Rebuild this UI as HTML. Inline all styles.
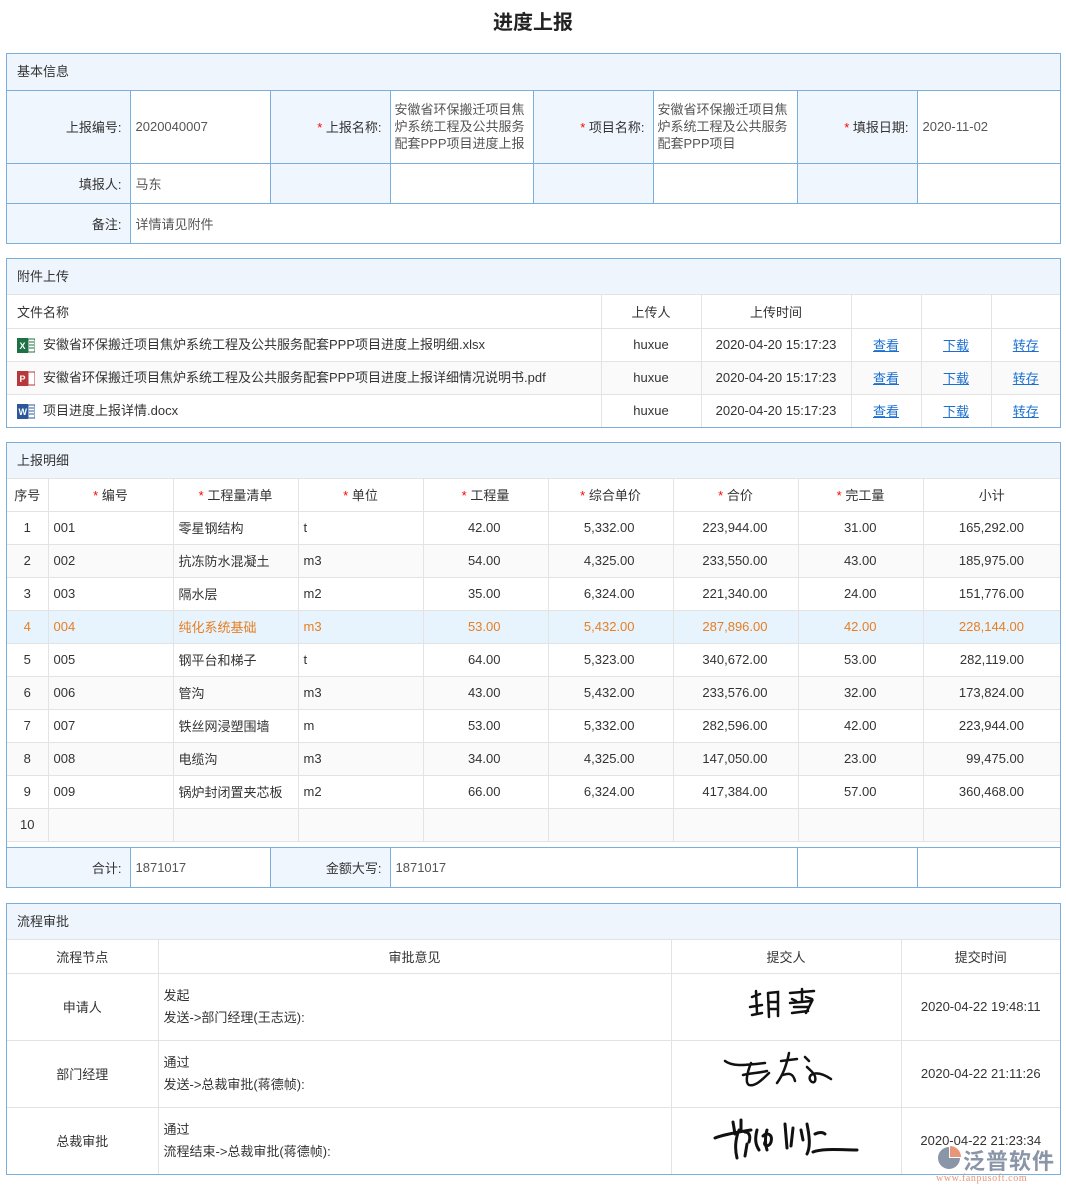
<!DOCTYPE html>
<html><head><meta charset="utf-8">
<style>
*{box-sizing:border-box;margin:0;padding:0}
body{width:1066px;height:1192px;background:#fff;font-family:"Liberation Sans","Noto Sans CJK SC",sans-serif;font-size:13px;color:#333;position:relative;overflow:hidden}
h1{position:absolute;left:0;width:1066px;top:9px;text-align:center;font-size:20px;font-weight:bold;color:#222;line-height:28px}
.sec{position:absolute;left:6px;width:1055px;border:1px solid #7aaedc;background:#fff;overflow:hidden}
.hd{height:36px;line-height:35px;padding-left:10px;background:#eef5fd;border-bottom:1px solid #e3e3e3;color:#333}
table{border-collapse:collapse;border-style:hidden;width:100%;table-layout:fixed}
td{border:1px solid #e3e3e3;padding:0 5px;white-space:nowrap;overflow:hidden}
.b td{border-color:#7aaedc}
.lb{background:#f0f6fd;text-align:right;padding-right:8px}
.v{color:#555}
.r{color:#f00}
.c{text-align:center}
.rt{text-align:right}
a{color:#1a6fd0;text-decoration:underline}
.alt td{background:#fafafa}
.hl td{background:#e8f4fd;color:#e67e22}
.ic{display:inline-block;width:18px;height:18px;vertical-align:middle;margin-right:8px;position:relative;top:-1px}
</style></head><body>
<h1>进度上报</h1>

<div class="sec" style="top:53px;height:191px;background:#f0f6fd">
<div class="hd" style="height:37px;line-height:36px;border-bottom-color:#7aaedc">基本信息</div>
<table class="b" style="background:#fff">
<colgroup><col style="width:123px"><col style="width:140px"><col style="width:120px"><col style="width:143px"><col style="width:120px"><col style="width:144px"><col style="width:120px"><col style="width:143px"></colgroup>
<tr style="height:72px"><td class="lb">上报编号:</td><td class="v">2020040007</td><td class="lb"><span class="r">*</span> 上报名称:</td><td class="v" style="white-space:normal;line-height:17px;padding:0 4px">安徽省环保搬迁项目焦炉系统工程及公共服务配套PPP项目进度上报</td><td class="lb"><span class="r">*</span> 项目名称:</td><td class="v" style="white-space:normal;line-height:17px;padding:0 4px">安徽省环保搬迁项目焦炉系统工程及公共服务配套PPP项目</td><td class="lb"><span class="r">*</span> 填报日期:</td><td class="v">2020-11-02</td></tr>
<tr style="height:40px"><td class="lb">填报人:</td><td class="v">马东</td><td class="lb"></td><td></td><td class="lb"></td><td></td><td class="lb"></td><td></td></tr>
<tr style="height:41px"><td class="lb">备注:</td><td class="v" colspan="7">详情请见附件</td></tr>
</table></div>

<div class="sec" style="top:258px;height:170px">
<div class="hd">附件上传</div>
<table>
<colgroup><col style="width:594px"><col style="width:100px"><col style="width:150px"><col style="width:70px"><col style="width:70px"><col style="width:69px"></colgroup>
<tr style="height:33px"><td style="padding-left:10px">文件名称</td><td class="c">上传人</td><td class="c">上传时间</td><td></td><td></td><td></td></tr>
<tr style="height:33px"><td style="padding-left:10px"><svg class="ic" viewBox="0 0 18 18"><rect x="0" y="2" width="11" height="15" fill="#1e7145"/><rect x="11" y="3" width="7" height="13" fill="#fff" stroke="#1e7145"/><path d="M12 6h5M12 9h5M12 12h5" stroke="#1e7145"/><text x="2.5" y="13" font-size="9" fill="#fff" font-family="Liberation Sans" font-weight="bold">X</text></svg>安徽省环保搬迁项目焦炉系统工程及公共服务配套PPP项目进度上报明细.xlsx</td><td class="c">huxue</td><td class="c">2020-04-20 15:17:23</td><td class="c"><a>查看</a></td><td class="c"><a>下载</a></td><td class="c"><a>转存</a></td></tr>
<tr style="height:33px" class="alt"><td style="padding-left:10px"><svg class="ic" viewBox="0 0 18 18"><rect x="0" y="2" width="11" height="15" fill="#b7373a"/><rect x="11" y="3" width="7" height="13" fill="#fff" stroke="#b7373a"/><text x="2.5" y="13" font-size="9" fill="#fff" font-family="Liberation Sans" font-weight="bold">P</text></svg>安徽省环保搬迁项目焦炉系统工程及公共服务配套PPP项目进度上报详细情况说明书.pdf</td><td class="c">huxue</td><td class="c">2020-04-20 15:17:23</td><td class="c"><a>查看</a></td><td class="c"><a>下载</a></td><td class="c"><a>转存</a></td></tr>
<tr style="height:33px"><td style="padding-left:10px"><svg class="ic" viewBox="0 0 18 18"><rect x="0" y="2" width="11" height="15" fill="#2b579a"/><rect x="11" y="3" width="7" height="13" fill="#fff" stroke="#2b579a"/><path d="M12 6h5M12 9h5M12 12h5" stroke="#2b579a"/><text x="1.5" y="13" font-size="9" fill="#fff" font-family="Liberation Sans" font-weight="bold">W</text></svg>项目进度上报详情.docx</td><td class="c">huxue</td><td class="c">2020-04-20 15:17:23</td><td class="c"><a>查看</a></td><td class="c"><a>下载</a></td><td class="c"><a>转存</a></td></tr>
</table></div>

<div class="sec" style="top:442px;height:446px">
<div class="hd">上报明细</div>
<table>
<colgroup><col style="width:41px"><col style="width:125px"><col style="width:125px"><col style="width:125px"><col style="width:125px"><col style="width:125px"><col style="width:125px"><col style="width:125px"><col style="width:137px"></colgroup>
<tr style="height:32px"><td class="c" style="padding:0">序号</td><td class="c"><span class="r">*</span> 编号</td><td class="c"><span class="r">*</span> 工程量清单</td><td class="c"><span class="r">*</span> 单位</td><td class="c"><span class="r">*</span> 工程量</td><td class="c"><span class="r">*</span> 综合单价</td><td class="c"><span class="r">*</span> 合价</td><td class="c"><span class="r">*</span> 完工量</td><td class="c">小计</td></tr>
<tr style="height:33px"><td class="c">1</td><td>001</td><td>零星钢结构</td><td>t</td><td class="rt" style="padding-right:47px">42.00</td><td class="rt" style="padding-right:38px">5,332.00</td><td class="rt" style="padding-right:30px">223,944.00</td><td class="rt" style="padding-right:46px">31.00</td><td class="rt" style="padding-right:36px">165,292.00</td></tr>
<tr style="height:33px" class="alt"><td class="c">2</td><td>002</td><td>抗冻防水混凝土</td><td>m3</td><td class="rt" style="padding-right:47px">54.00</td><td class="rt" style="padding-right:38px">4,325.00</td><td class="rt" style="padding-right:30px">233,550.00</td><td class="rt" style="padding-right:46px">43.00</td><td class="rt" style="padding-right:36px">185,975.00</td></tr>
<tr style="height:33px"><td class="c">3</td><td>003</td><td>隔水层</td><td>m2</td><td class="rt" style="padding-right:47px">35.00</td><td class="rt" style="padding-right:38px">6,324.00</td><td class="rt" style="padding-right:30px">221,340.00</td><td class="rt" style="padding-right:46px">24.00</td><td class="rt" style="padding-right:36px">151,776.00</td></tr>
<tr style="height:33px" class="hl"><td class="c">4</td><td>004</td><td>纯化系统基础</td><td>m3</td><td class="rt" style="padding-right:47px">53.00</td><td class="rt" style="padding-right:38px">5,432.00</td><td class="rt" style="padding-right:30px">287,896.00</td><td class="rt" style="padding-right:46px">42.00</td><td class="rt" style="padding-right:36px">228,144.00</td></tr>
<tr style="height:33px"><td class="c">5</td><td>005</td><td>钢平台和梯子</td><td>t</td><td class="rt" style="padding-right:47px">64.00</td><td class="rt" style="padding-right:38px">5,323.00</td><td class="rt" style="padding-right:30px">340,672.00</td><td class="rt" style="padding-right:46px">53.00</td><td class="rt" style="padding-right:36px">282,119.00</td></tr>
<tr style="height:33px" class="alt"><td class="c">6</td><td>006</td><td>管沟</td><td>m3</td><td class="rt" style="padding-right:47px">43.00</td><td class="rt" style="padding-right:38px">5,432.00</td><td class="rt" style="padding-right:30px">233,576.00</td><td class="rt" style="padding-right:46px">32.00</td><td class="rt" style="padding-right:36px">173,824.00</td></tr>
<tr style="height:33px"><td class="c">7</td><td>007</td><td>铁丝网浸塑围墙</td><td>m</td><td class="rt" style="padding-right:47px">53.00</td><td class="rt" style="padding-right:38px">5,332.00</td><td class="rt" style="padding-right:30px">282,596.00</td><td class="rt" style="padding-right:46px">42.00</td><td class="rt" style="padding-right:36px">223,944.00</td></tr>
<tr style="height:33px" class="alt"><td class="c">8</td><td>008</td><td>电缆沟</td><td>m3</td><td class="rt" style="padding-right:47px">34.00</td><td class="rt" style="padding-right:38px">4,325.00</td><td class="rt" style="padding-right:30px">147,050.00</td><td class="rt" style="padding-right:46px">23.00</td><td class="rt" style="padding-right:36px">99,475.00</td></tr>
<tr style="height:33px"><td class="c">9</td><td>009</td><td>锅炉封闭置夹芯板</td><td>m2</td><td class="rt" style="padding-right:47px">66.00</td><td class="rt" style="padding-right:38px">6,324.00</td><td class="rt" style="padding-right:30px">417,384.00</td><td class="rt" style="padding-right:46px">57.00</td><td class="rt" style="padding-right:36px">360,468.00</td></tr>
<tr style="height:33px" class="alt"><td class="c" style="padding:0">10</td><td></td><td></td><td></td><td></td><td></td><td></td><td></td><td></td></tr>
</table>
<div style="height:6px;border-top:1px solid #e3e3e3"></div>
<table class="b" style="border-top:1px solid #7aaedc;border-style:solid hidden hidden hidden">
<colgroup><col style="width:123px"><col style="width:140px"><col style="width:120px"><col style="width:407px"><col style="width:120px"><col style="width:143px"></colgroup>
<tr style="height:39px"><td class="lb">合计:</td><td class="v">1871017</td><td class="lb">金额大写:</td><td class="v">1871017</td><td></td><td></td></tr>
</table></div>

<div class="sec" style="top:903px;height:272px">
<div class="hd">流程审批</div>
<table>
<colgroup><col style="width:151px"><col style="width:513px"><col style="width:230px"><col style="width:159px"></colgroup>
<tr style="height:33px"><td class="c">流程节点</td><td class="c">审批意见</td><td class="c">提交人</td><td class="c">提交时间</td></tr>
<tr style="height:67px"><td class="c">申请人</td><td style="line-height:22px">发起<br>发送-&gt;部门经理(王志远):</td><td class="c"><svg width="80" height="40" viewBox="0 0 80 40" fill="none" stroke="#111" stroke-width="2.5" stroke-linecap="round"><path d="M6 12l8 -3M10 6l1 22M4 22l12 -2M6 30l10 -2M22 8l1 24M22 8l10 -1 0 24M23 17l8 0M23 24l8 0M44 8l24 -2M56 4l0 12M46 14l4 2M60 12l6 2M44 18l22 -2 -6 12M48 22l14 0M46 28l16 -2"/></svg></td><td class="c">2020-04-22 19:48:11</td></tr>
<tr style="height:67px"><td class="c">部门经理</td><td style="line-height:22px">通过<br>发送-&gt;总裁审批(蒋德帧):</td><td class="c"><svg width="130" height="50" viewBox="0 0 130 50" fill="none" stroke="#111" stroke-width="2.5" stroke-linecap="round"><path d="M4 14c8 6 20 4 40 2M30 16c-4 10-6 20-2 22 6 2 14-6 20-12M22 28c8-2 16-2 24-4M60 14l16-2M68 6c-2 10-6 22-12 30M62 28c6-2 10-2 12 6M84 10l4 4M86 20c4 4 10 8 8 14-2 4-8-2-4-6 6-4 14 0 20 4"/></svg></td><td class="c">2020-04-22 21:11:26</td></tr>
<tr style="height:67px"><td class="c">总裁审批</td><td style="line-height:22px">通过<br>流程结束-&gt;总裁审批(蒋德帧):</td><td class="c"><svg width="150" height="50" viewBox="0 0 150 50" fill="none" stroke="#111" stroke-width="3" stroke-linecap="round"><path d="M4 24c10-4 24-6 36-8M22 8l2 12M30 6l0 10M28 16c-4 10-4 20-2 28M34 18c4 0 6 4 4 10M36 30l-2 12M46 16c-2 8-2 14 2 20M56 16c-2 6-2 14 0 20M52 22c4-4 10-2 8 6-2 6-8 4-6 0M74 10l2 24M82 14l-2 18M90 16l2 10M96 10c2 10 4 22 0 30M104 20c4-2 8-2 10 0M102 38c10-4 30-2 44-2"/></svg></td><td class="c">2020-04-22 21:23:34</td></tr>
</table></div>

<div style="position:absolute;left:936px;top:1145px;width:125px;height:45px">
<svg width="26" height="26" viewBox="0 0 26 26" style="position:absolute;left:0;top:0"><path d="M13 2A11 11 0 1 0 24 13H13z" fill="#8a95a8"/><path d="M14 1a11 11 0 0 1 11 11H14z" fill="#e8967a"/></svg>
<div style="position:absolute;left:27px;top:-1px;font-size:22px;color:#8a95a8;font-weight:bold;letter-spacing:1px;font-family:'Liberation Sans','Noto Sans CJK SC',sans-serif">泛普软件</div>
<div style="position:absolute;left:0;top:28px;font-size:10px;color:#e8967a;font-family:'Liberation Serif',serif;letter-spacing:0.6px">www.fanpusoft.com</div>
</div>
</body></html>
